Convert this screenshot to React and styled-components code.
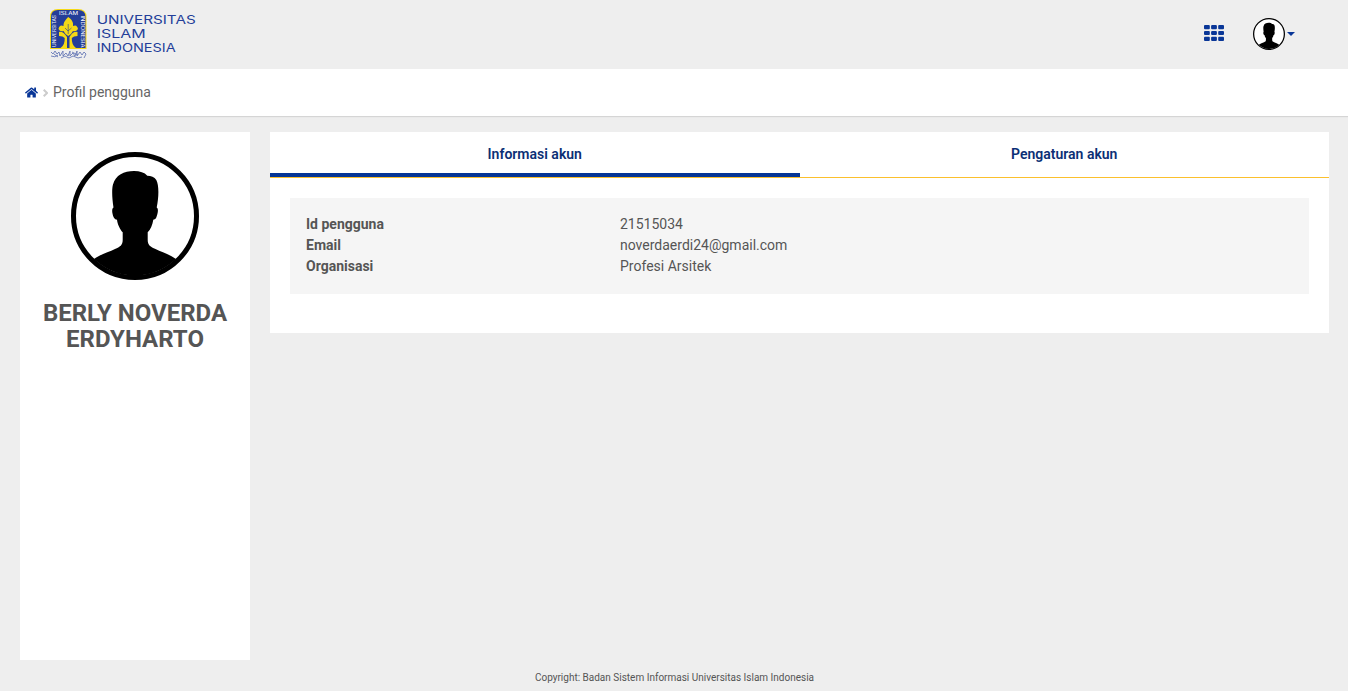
import React from 'react';
import styled, { createGlobalStyle } from 'styled-components';
import { FaHome } from 'react-icons/fa';

const Global = createGlobalStyle`
  *, *::before, *::after { box-sizing: border-box; }
  body { margin: 0; background: #eee; color: #555; font: 14px/21px Roboto, sans-serif; }
`;

const Page = styled.div`
  min-height: 691px;
  display: flex;
  flex-direction: column;
`;
const Header = styled.header`
  height: 69px;
  padding: 0 53px 0 50px;
  display: flex;
  align-items: center;
  justify-content: space-between;
`;
const LogoSvg = styled.svg`
  display: block;
  width: 150px;
  height: 69px;
`;
const Actions = styled.div`
  display: flex;
  align-items: center;
  gap: 29px;
  padding-bottom: 1px;
`;
const AppsIcon = styled.svg`
  display: block;
  width: 20px;
  height: 16px;
  margin-bottom: 2px;
  fill: #093697;
`;
const UserMenu = styled.div`
  display: flex;
  align-items: center;
  gap: 2px;
`;
const Caret = styled.span`
  border: 4px solid transparent;
  border-top-color: #093697;
  border-bottom: 0;
`;
const AvatarSvg = styled.svg`
  display: block;
  width: ${(p) => p.$size}px;
  height: ${(p) => p.$size}px;
`;
const Breadcrumb = styled.nav`
  height: 47px;
  padding: 0 25px;
  display: flex;
  align-items: center;
  background: #fff;
  box-shadow: 0 1px 1px rgba(0, 0, 0, 0.1);
  color: #666;
`;
const HomeIcon = styled(FaHome)`
  width: 13px;
  height: 13px;
  margin-bottom: 1px;
  color: #093697;
`;
const Chevron = styled.svg`
  width: 5px;
  height: 8px;
  margin: 0 5px;
  fill: none;
  stroke: #ccc;
  stroke-width: 2;
`;
const Content = styled.div`
  flex: 1;
  display: flex;
  align-items: flex-start;
  gap: 20px;
  padding: 16px 19px 0 20px;
`;
const Profile = styled.aside`
  width: 230px;
  height: 528px;
  padding: 20px;
  background: #fff;
  display: flex;
  flex-direction: column;
  align-items: center;
`;
const Name = styled.h1`
  margin: 20px 0 0;
  font-size: 24px;
  line-height: 26px;
  font-weight: 700;
  text-align: center;
`;
const Panel = styled.main`
  flex: 1;
  height: 201px;
  background: #fff;
`;
const Tabs = styled.div`
  display: flex;
  height: 46px;
  border-bottom: 1px solid #fbc02d;
`;
const Tab = styled.div`
  flex: 1;
  padding-top: 12px;
  text-align: center;
  font-weight: 600;
  color: #0b2f75;
  border-bottom: ${(p) => (p.$active ? '4px solid #053594' : '0')};
`;
const Info = styled.dl`
  margin: 20px;
  padding: 16px;
  height: 96px;
  background: #f5f5f5;
`;
const Row = styled.div`
  display: grid;
  grid-template-columns: 314px 1fr;
`;
const Label = styled.dt`
  font-weight: 700;
`;
const Value = styled.dd`
  margin: 0;
`;
const Footer = styled.footer`
  height: 31px;
  padding: 7px 0 0 1px;
  text-align: center;
  font-size: 10px;
`;

function Avatar({ size }) {
  return (
    <AvatarSvg $size={size} viewBox="0 0 128 128">
      <circle cx="64" cy="64" r="61.5" fill="#fff" stroke="#000" strokeWidth="5" />
      <path d="M23 107C30 102 38 100 44 97C49 95 51.700 93 51.700 88V80.300C49 77.500 46.500 72 46 67.700C43.500 67.700 42 65 41.300 60.500C41 58 41.300 56 42.500 55.500C41 46 40.700 37 42 32.500C44.500 23 53 19 63 19C69 19 73.500 20.500 76.300 23.700C80 23.700 83.500 25 85.300 28C88 33 88 44 85.700 55.500C87 56 87.200 58.500 86.500 61.500C85.500 66 84.500 67.700 82.300 67.700C81.500 73 79.500 77.500 76.700 80.300V88C76.700 93 79.500 95 84.500 97C90.500 100 98 102 105 107A59 59 0 0 1 23 107Z" />
    </AvatarSvg>
  );
}

function Logo() {
  const lines = [['UNIVERSITAS', 99, 24], ['ISLAM', 49, 38], ['INDONESIA', 79, 52]];
  return (
    <LogoSvg viewBox="0 0 150 69">
      <path d="M0 49V17Q0 9 8 9H28Q36.500 9 36.500 17V49Z" fill="#f5d916" />
      <path d="M1 48V17Q1 10 8 10H28Q35.500 10 35.500 17V48Z" fill="#243e99" />
      <g fill="#f5d916">
        <path d="M18.200 17C22 20 23.500 22 23 26Q27 24 28 29Q26 32 23 31Q21 35 18.200 36Q15.500 35 13.500 31Q10 32 8.500 29Q9.500 24 13.500 26Q13 22 18.200 17Z" />
        <path d="M9 32Q13 31 17 37V48H10.500Q15 45 14.700 38Q13 36 9 36Z" />
        <path d="M27.500 32Q23 31 19.500 37V48H26Q21.500 45 21.800 38Q23.500 36 27.500 36Z" />
      </g>
      <path d="M18.200 24V34M15 28L18 31L21.500 28" fill="none" stroke="#243e99" strokeWidth=".6" />
      <g fill="#fff" fontFamily="Inter, sans-serif" fontWeight="400" fontSize="4.2">
        <text x="9" y="14.500" textLength="19" lengthAdjust="spacingAndGlyphs">ISLAM</text>
        <text transform="translate(6 47) rotate(-90)" textLength="32" lengthAdjust="spacingAndGlyphs">UNIVERSITAS</text>
        <text transform="translate(31 15.500) rotate(90)" textLength="32" lengthAdjust="spacingAndGlyphs">INDONESIA</text>
      </g>
      <path d="M1 52L3 54L5 51L7 54L9 52L10 56L13 51V56L16 53L18 56L20 51V56L23 53L25 56L27 51V56L30 52L32 55L34 52L36 54L34 58M1 56Q5 58 8 55M11 58L15 56L19 58L23 56L28 58L32 57M4 54L8 57M22 52L28 55" fill="none" stroke="#6678b5" strokeWidth=".9" />
      <g fill="#243e99" fontFamily="Inter, sans-serif" fontWeight="400" fontSize="11.400">
        {lines.map(([text, width, y]) => (
          <text key={text} x="46.700" y={y} textLength={width} lengthAdjust="spacingAndGlyphs">{text}</text>
        ))}
      </g>
    </LogoSvg>
  );
}

export default function App() {
  const rows = [
    ['Id pengguna', '21515034'],
    ['Email', 'noverdaerdi24@gmail.com'],
    ['Organisasi', 'Profesi Arsitek'],
  ];
  return (
    <Page>
      <Global />
      <Header>
        <Logo />
        <Actions>
          <AppsIcon viewBox="0 0 20 16">
            {[0, 5.9, 11.8].map((y) => [0, 7.1, 14.2].map((x) => (
              <rect key={`${x}-${y}`} x={x} y={y} width="5.8" height="4.2" rx="1" />
            )))}
          </AppsIcon>
          <UserMenu>
            <Avatar size={32} />
            <Caret />
          </UserMenu>
        </Actions>
      </Header>
      <Breadcrumb>
        <HomeIcon />
        <Chevron viewBox="0 0 5 8"><path d="M.7 .7L4 4L.7 7.300" /></Chevron>
        <span>Profil pengguna</span>
      </Breadcrumb>
      <Content>
        <Profile>
          <Avatar size={128} />
          <Name>BERLY NOVERDA ERDYHARTO</Name>
        </Profile>
        <Panel>
          <Tabs>
            <Tab $active>Informasi akun</Tab>
            <Tab>Pengaturan akun</Tab>
          </Tabs>
          <Info>
            {rows.map(([label, value]) => (
              <Row key={label}>
                <Label>{label}</Label>
                <Value>{value}</Value>
              </Row>
            ))}
          </Info>
        </Panel>
      </Content>
      <Footer>Copyright: Badan Sistem Informasi Universitas Islam Indonesia</Footer>
    </Page>
  );
}
